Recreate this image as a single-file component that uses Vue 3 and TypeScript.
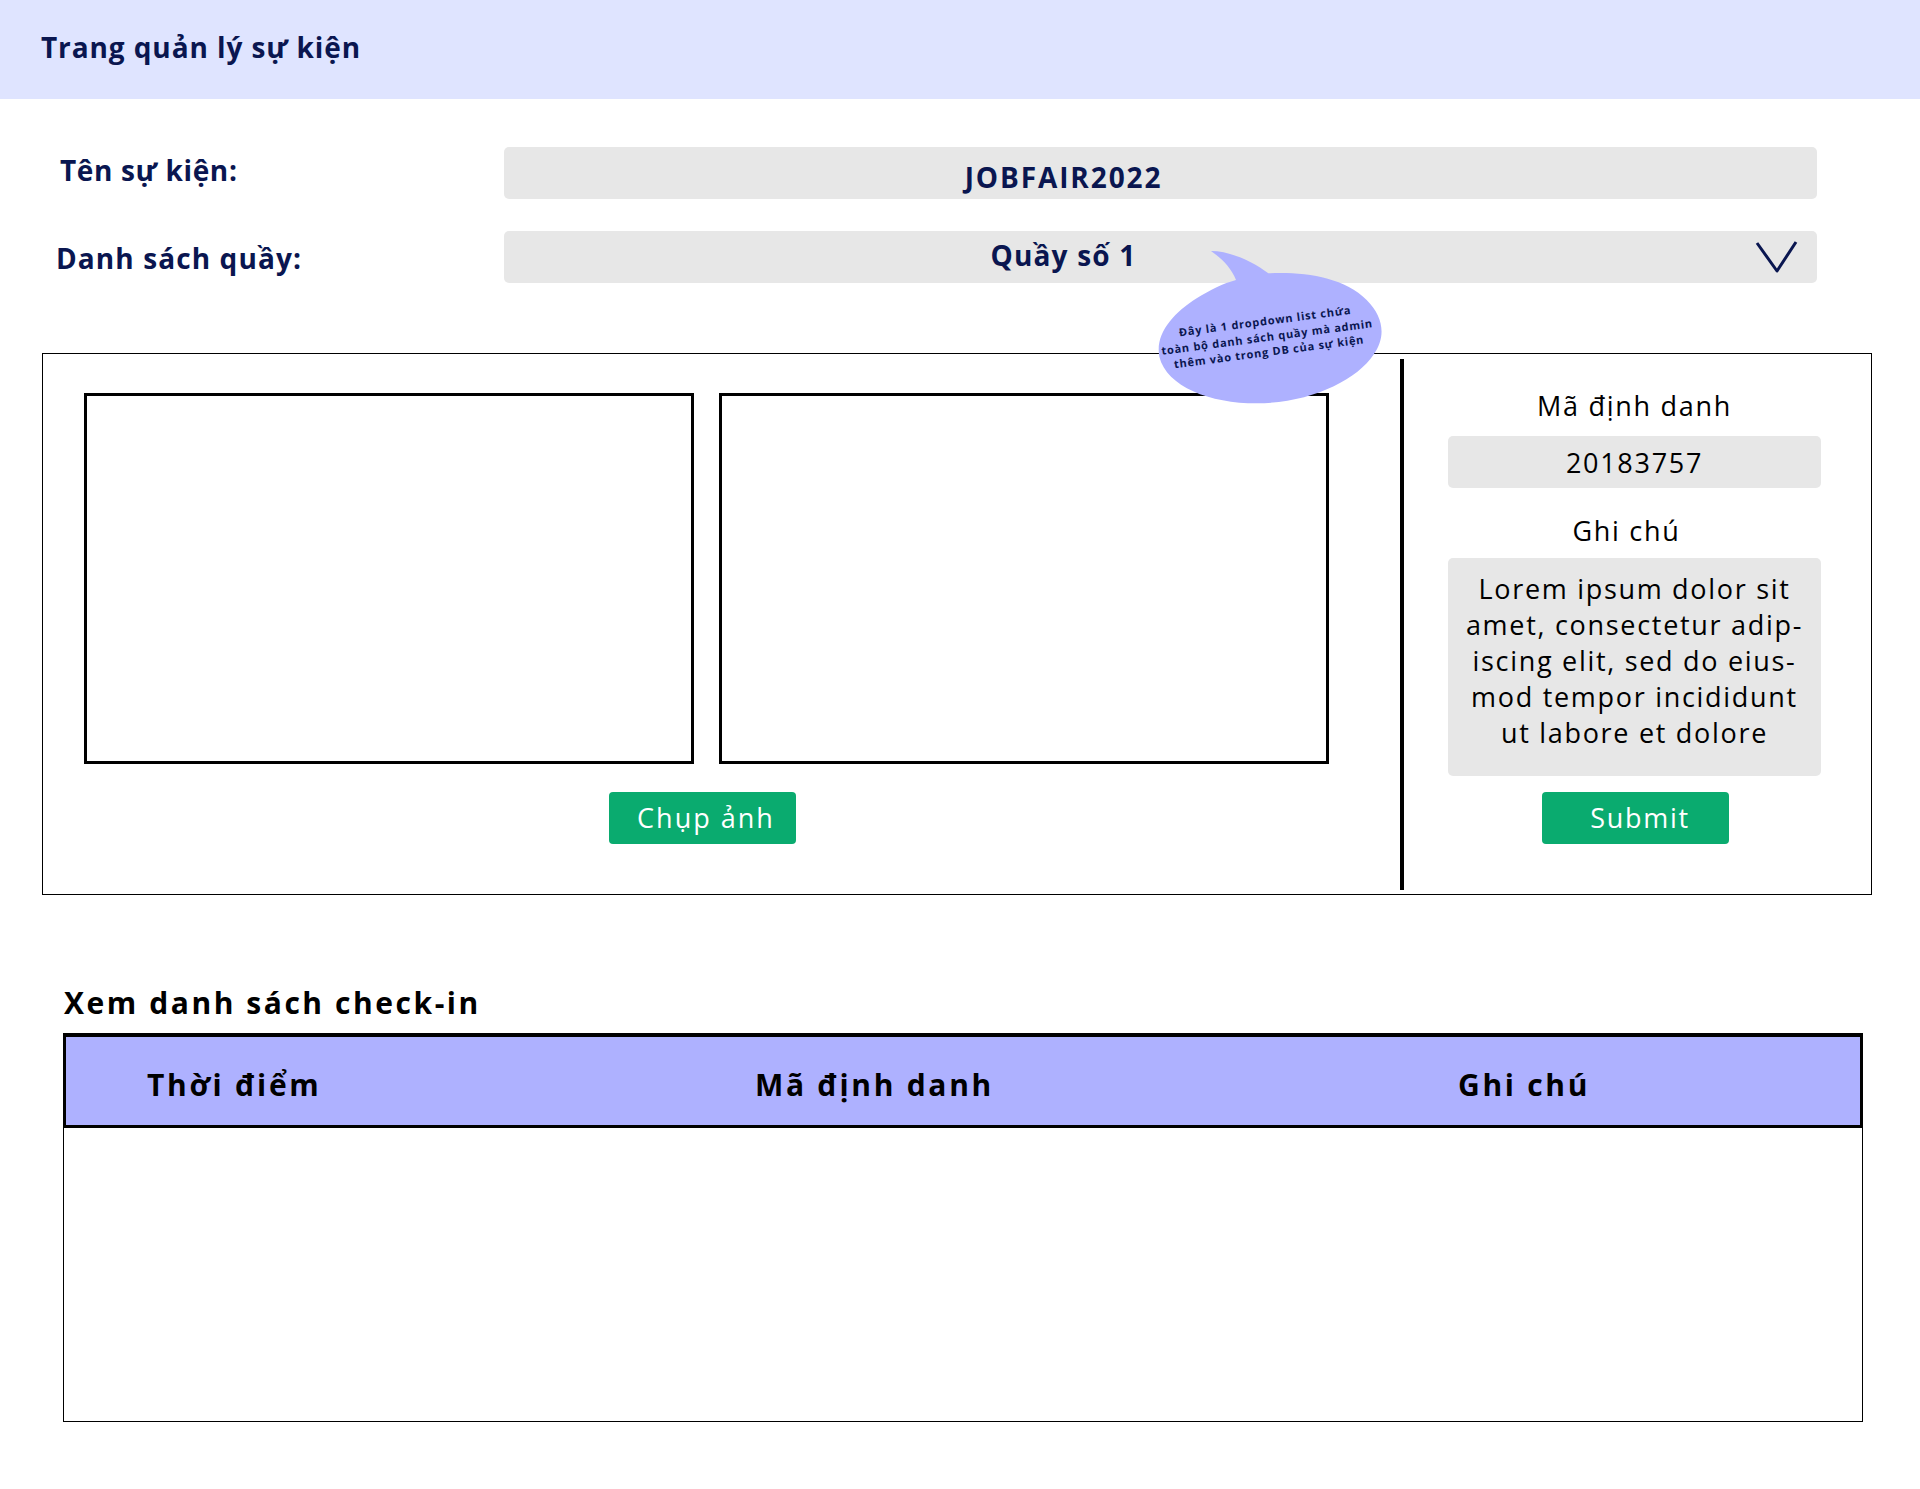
<script setup lang="ts">
const columns: string[] = ['Thời điểm', 'Mã định danh', 'Ghi chú']
const noteLines: string[] = [
  'Lorem ipsum dolor sit',
  'amet, consectetur adip-',
  'iscing elit, sed do eius-',
  'mod tempor incididunt',
  'ut labore et dolore',
]
const bubbleLines: string[] = [
  'Đây là 1 dropdown list chứa',
  'toàn bộ danh sách quầy mà admin',
  'thêm vào trong DB của sự kiện',
]
</script>

<template>
  <div class="page">
    <header class="topbar">Trang quản lý sự kiện</header>

    <section class="fields">
      <div class="field-row">
        <label class="field-label label-event">Tên sự kiện:</label>
        <div class="field-value event-value">JOBFAIR2022</div>
      </div>
      <div class="field-row">
        <label class="field-label label-booth">Danh sách quầy:</label>
        <div class="field-value select-value">
          <span>Quầy số 1</span>
          <svg class="chevron" width="44" height="32" viewBox="0 0 44 32" fill="none">
            <path d="M2 2 L22 30 L41 1" stroke="#0a1650" stroke-width="3" stroke-linejoin="round" />
          </svg>
        </div>
      </div>
    </section>

    <section class="panel">
      <div class="capture">
        <div class="cameras">
          <div class="camera"></div>
          <div class="camera"></div>
        </div>
        <button class="action shoot" type="button">Chụp ảnh</button>
      </div>
      <div class="divider"></div>
      <div class="form">
        <div class="form-label id-label">Mã định danh</div>
        <div class="id-input">20183757</div>
        <div class="form-label note-label">Ghi chú</div>
        <div class="note-input">
          <div v-for="line in noteLines" :key="line">{{ line }}</div>
        </div>
        <button class="action submit" type="button">Submit</button>
      </div>
    </section>

    <h2 class="list-title">Xem danh sách check-in</h2>
    <section class="table">
      <div class="table-head">
        <div v-for="column in columns" :key="column">{{ column }}</div>
      </div>
      <div class="table-body"></div>
    </section>

    <div class="bubble">
      <svg width="280" height="170" viewBox="0 0 840 510">
        <path
          d="M243 33 C300 33 370 65 415 100 C520 95 640 110 710 180 C760 230 770 290 730 345 C680 420 540 490 380 490 C240 490 110 440 88 350 C75 280 130 220 200 175 C240 150 280 130 318 120 C305 85 275 55 243 33 Z"
          fill="#aeb1ff"
        />
      </svg>
      <div class="bubble-text">
        <div v-for="line in bubbleLines" :key="line">{{ line }}</div>
      </div>
    </div>
  </div>
</template>

<style scoped>
.page {
  position: relative;
  width: 1920px;
  height: 1489px;
  overflow: hidden;
  background: #fff;
  color: #000;
  font-family: "Open Sans", "Noto Sans", sans-serif;
}
.topbar {
  box-sizing: border-box;
  height: 99px;
  padding: 0 0 6px 41px;
  display: flex;
  align-items: center;
  background: #dfe4ff;
  color: #0a1650;
  font-size: 28px;
  font-weight: 700;
  letter-spacing: 0.9px;
}
.fields {
  margin-top: 48px;
  display: flex;
  flex-direction: column;
  gap: 32px;
}
.field-row {
  display: flex;
  height: 52px;
  align-items: center;
}
.field-label {
  width: 504px;
  flex: none;
  box-sizing: border-box;
  color: #0a1650;
  font-size: 28px;
  font-weight: 700;
}
.label-event {
  padding: 0 0 7px 60px;
  letter-spacing: 0.65px;
}
.label-booth {
  padding: 2px 0 0 56px;
  letter-spacing: 1.1px;
}
.field-value {
  position: relative;
  box-sizing: border-box;
  width: 1313px;
  height: 52px;
  padding-right: 194px;
  border-radius: 5px;
  background: #e7e7e7;
  color: #0a1650;
  font-size: 28px;
  font-weight: 700;
  text-align: center;
}
.event-value {
  line-height: 60px;
  letter-spacing: 1.9px;
}
.select-value {
  line-height: 48px;
  letter-spacing: 1.2px;
}
.chevron {
  position: absolute;
  left: 1251px;
  top: 10px;
}
.panel {
  box-sizing: border-box;
  display: flex;
  width: 1830px;
  height: 542px;
  margin: 70px 0 0 42px;
  border: 1px solid #000;
}
.capture {
  box-sizing: border-box;
  width: 1357px;
  padding: 39px 0 0 41px;
  flex: none;
}
.cameras {
  display: flex;
  gap: 25px;
}
.camera {
  box-sizing: border-box;
  width: 610px;
  height: 371px;
  border: 3px solid #000;
}
.action {
  display: block;
  box-sizing: border-box;
  width: 187px;
  height: 52px;
  border: 0;
  border-radius: 4px;
  background: #0aab6f;
  color: #fff;
  font-family: inherit;
  font-size: 27px;
}
.shoot {
  margin: 28px 0 0 525px;
  padding: 0 0 2px 7px;
  letter-spacing: 2px;
}
.divider {
  width: 4px;
  flex: none;
  margin: 5px 0 4px;
  background: #000;
}
.form {
  box-sizing: border-box;
  width: 400px;
  padding: 0 0 0 44px;
  flex: none;
}
.form-label {
  font-size: 27px;
  line-height: 36px;
  letter-spacing: 1.7px;
}
.id-label {
  width: 373px;
  margin-top: 34px;
  text-align: center;
}
.id-input {
  width: 373px;
  height: 52px;
  margin-top: 12px;
  border-radius: 5px;
  background: #e7e7e7;
  font-size: 27px;
  line-height: 54px;
  letter-spacing: 1.7px;
  text-align: center;
}
.note-label {
  width: 357px;
  margin-top: 25px;
  text-align: center;
}
.note-input {
  width: 373px;
  height: 218px;
  margin-top: 9px;
  box-sizing: border-box;
  padding-top: 13px;
  border-radius: 5px;
  background: #e7e7e7;
  font-size: 27px;
  line-height: 36px;
  letter-spacing: 1.7px;
  text-align: center;
}
.submit {
  margin: 16px 0 0 94px;
  padding: 0 0 2px 9px;
  letter-spacing: 1.7px;
}
.list-title {
  margin: 89px 0 0 64px;
  font-size: 30px;
  line-height: 38px;
  font-weight: 700;
  letter-spacing: 2.55px;
}
.table {
  width: 1800px;
  margin: 11px 0 0 63px;
}
.table-head {
  box-sizing: border-box;
  display: grid;
  grid-template-columns: 608px 703px 1fr;
  align-items: center;
  height: 95px;
  padding: 6px 0 0 81px;
  border: 3px solid #000;
  border-top-width: 4px;
  background: #aeb1ff;
  font-size: 30px;
  font-weight: 700;
  letter-spacing: 2.7px;
}
.table-body {
  box-sizing: border-box;
  height: 294px;
  border: 1px solid #000;
  border-top: 0;
}
.bubble {
  position: absolute;
  left: 1130px;
  top: 240px;
  width: 280px;
  height: 170px;
}
.bubble svg {
  display: block;
}
.bubble-text {
  position: absolute;
  left: 22px;
  top: 73px;
  width: 230px;
  color: #0a1650;
  font-size: 11px;
  font-weight: 700;
  line-height: 15.5px;
  letter-spacing: 0.78px;
  text-align: center;
  white-space: nowrap;
  transform: rotate(-7.5deg);
}
</style>
